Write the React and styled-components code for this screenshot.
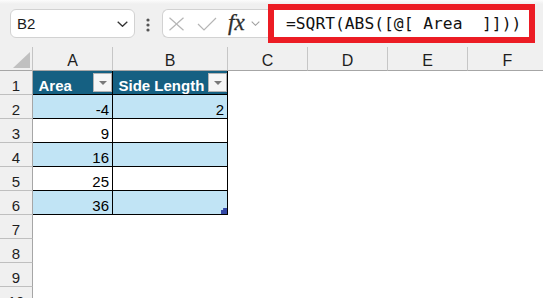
import React from "react";
import styled, { createGlobalStyle } from "styled-components";

const GlobalStyle = createGlobalStyle`
  html, body { margin: 0; padding: 0; background: #fff; overflow: hidden; }
  body { font-family: "Liberation Sans", Arial, sans-serif; }
`;

const Page = styled.div`
  width: 543px;
  height: 298px;
  overflow: hidden;
  background: #fff;
`;

const Toolbar = styled.div`
  height: 47px;
  box-sizing: border-box;
  display: flex;
  align-items: flex-start;
  padding: 9px 0 0 10px;
  background: linear-gradient(#fcfcfc 0px, #f0f0f0 4px);
`;

const NameBox = styled.div`
  box-sizing: border-box;
  width: 125px;
  height: 29px;
  background: #fff;
  border: 1px solid #d2d2d2;
  border-radius: 6px;
  display: flex;
  align-items: center;
  justify-content: space-between;
  padding: 0 6px;
  font-size: 15px;
  color: #1a1a1a;
`;

const Dots = styled.svg`
  margin: 9px 0 0 11px;
  flex: none;
`;

const FxBox = styled.div`
  box-sizing: border-box;
  margin-left: 12px;
  width: 106px;
  height: 29px;
  background: #fff;
  border: 1px solid #d2d2d2;
  border-right: none;
  border-radius: 6px 0 0 6px;
  display: flex;
  align-items: center;
  padding-left: 5px;
`;

const IconSlot = styled.svg`
  flex: none;
  margin-left: ${(p) => p.$ml || 0}px;
`;

const ChevronSlot = styled.span`
  display: flex;
  flex: none;
  margin-left: 6px;
`;

const FxText = styled.span`
  margin-left: 11px;
  font-family: "Liberation Serif", "DejaVu Serif", serif;
  font-style: italic;
  font-size: 23px;
  line-height: 22px;
  color: #2e2e2e;
  margin-top: -2px;
  -webkit-text-stroke: 0.3px #2e2e2e;
`;

const FormulaFrame = styled.div`
  box-sizing: border-box;
  margin-top: -5px;
  width: 267px;
  height: 39px;
  border: 6px solid #ec1c24;
  background: #fff;
  display: flex;
  align-items: center;
  padding-left: 12px;
  font-family: "DejaVu Sans Mono", "Liberation Mono", monospace;
  font-size: 16.3px;
  color: #111;
  white-space: pre;
`;

const Sheet = styled.div`
  display: grid;
  grid-template-columns: 33px 80px 115px 80px 80px 80px 80px;
  grid-auto-rows: 24px;
`;

const CellBase = styled.div`
  box-sizing: border-box;
  display: flex;
  align-items: flex-end;
  font-size: 15px;
  line-height: 17px;
  min-width: 0;
`;

const Corner = styled(CellBase)`
  background: #f0f0f0;
  border-right: 1px solid #c4c4c4;
  border-bottom: 1px solid #a6a6a6;
  align-items: flex-start;
  padding: 5px 0 0 13px;
`;

const ColHeader = styled(CellBase)`
  background: #f0f0f0;
  border-right: 1px solid #c6c6c6;
  border-bottom: 1px solid #a6a6a6;
  justify-content: center;
  font-size: 16px;
  line-height: 18px;
  color: #1e1e1e;
`;

const RowHeader = styled(CellBase)`
  background: #f0f0f0;
  border-right: 1px solid #a6a6a6;
  border-bottom: 1px solid #bfbfbf;
  justify-content: center;
  color: #1e1e1e;
`;

const TableHead = styled(CellBase)`
  background: #156082;
  color: #fff;
  font-weight: bold;
  border-right: 1px solid #000;
  border-bottom: 1px solid #000;
  justify-content: space-between;
  align-items: stretch;
  padding-left: 5.5px;
`;

const HeadLabel = styled.span`
  align-self: flex-end;
  white-space: nowrap;
`;

const FilterButton = styled.div`
  box-sizing: border-box;
  align-self: center;
  flex: none;
  width: 19px;
  height: 19px;
  background: #f6f6f6;
  border: 1px solid #b4b4b4;
  display: flex;
  align-items: center;
  justify-content: center;
  &::after {
    content: "";
    border-left: 4px solid transparent;
    border-right: 4px solid transparent;
    border-top: 4px solid #7a7a7a;
  }
`;

const DataCell = styled(CellBase)`
  position: relative;
  background: ${(p) => (p.$band ? "#c1e4f5" : "#fff")};
  border-right: 1px solid #000;
  border-bottom: 1px solid #000;
  justify-content: flex-end;
  padding-right: 3px;
  color: #000;
`;

const Blank = styled.div`
  background: #fff;
`;

const ResizeHandle = styled.div`
  position: absolute;
  right: 0;
  bottom: 0;
  width: 6px;
  height: 6px;
  background: #3348a6;
  clip-path: polygon(100% 0, 100% 100%, 0 100%, 0 35%, 35% 35%, 35% 0);
`;

const Chevron = ({ w, h, color, sw }) => (
  <svg width={w} height={h} viewBox={`0 0 ${w} ${h}`}>
    <polyline
      points={`0.7,0.7 ${w / 2},${h - 0.7} ${w - 0.7},0.7`}
      fill="none"
      stroke={color}
      strokeWidth={sw}
    />
  </svg>
);

const columns = ["A", "B", "C", "D", "E", "F"];
const data = [
  { a: "-4", b: "2" },
  { a: "9", b: "" },
  { a: "16", b: "" },
  { a: "25", b: "" },
  { a: "36", b: "" },
];

export default function App() {
  return (
    <Page>
      <GlobalStyle />
      <Toolbar>
        <NameBox>
          <span>B2</span>
          <Chevron w={11} h={6} color="#333" sw={1.3} />
        </NameBox>
        <Dots width="4" height="14" viewBox="0 0 4 14">
          <circle cx="2" cy="2" r="1.6" fill="#555" />
          <circle cx="2" cy="7" r="1.6" fill="#555" />
          <circle cx="2" cy="12" r="1.6" fill="#555" />
        </Dots>
        <FxBox>
          <IconSlot width="17" height="14" viewBox="0 0 17 14">
            <line x1="1.5" y1="0.8" x2="15.5" y2="13.2" stroke="#b5b5b5" strokeWidth="1.2" />
            <line x1="15.5" y1="0.8" x2="1.5" y2="13.2" stroke="#b5b5b5" strokeWidth="1.2" />
          </IconSlot>
          <IconSlot $ml={12} width="20" height="14" viewBox="0 0 20 14">
            <polyline points="1,7 7,13 19,1" fill="none" stroke="#b5b5b5" strokeWidth="1.2" />
          </IconSlot>
          <FxText>fx</FxText>
          <ChevronSlot>
            <Chevron w={9} h={5} color="#a0a0a0" sw={1.1} />
          </ChevronSlot>
        </FxBox>
        <FormulaFrame>{"=SQRT(ABS([@[ Area  ]]))"}</FormulaFrame>
      </Toolbar>

      <Sheet>
        <Corner>
          <svg width="17" height="16" viewBox="0 0 17 16">
            <polygon points="17,0 17,16 0,16" fill="#c0c0c0" />
          </svg>
        </Corner>
        {columns.map((c) => (
          <ColHeader key={c}>{c}</ColHeader>
        ))}

        <RowHeader>1</RowHeader>
        <TableHead>
          <HeadLabel>Area</HeadLabel>
          <FilterButton />
        </TableHead>
        <TableHead>
          <HeadLabel>Side Length</HeadLabel>
          <FilterButton />
        </TableHead>
        <Blank />
        <Blank />
        <Blank />
        <Blank />

        {data.map((row, i) => (
          <React.Fragment key={i}>
            <RowHeader>{i + 2}</RowHeader>
            <DataCell $band={i % 2 === 0}>{row.a}</DataCell>
            <DataCell $band={i % 2 === 0}>
              {row.b}
              {i === data.length - 1 && <ResizeHandle />}
            </DataCell>
            <Blank />
            <Blank />
            <Blank />
            <Blank />
          </React.Fragment>
        ))}

        {[7, 8, 9, 10].map((n) => (
          <React.Fragment key={n}>
            <RowHeader>{n}</RowHeader>
            <Blank />
            <Blank />
            <Blank />
            <Blank />
            <Blank />
            <Blank />
          </React.Fragment>
        ))}
      </Sheet>
    </Page>
  );
}
